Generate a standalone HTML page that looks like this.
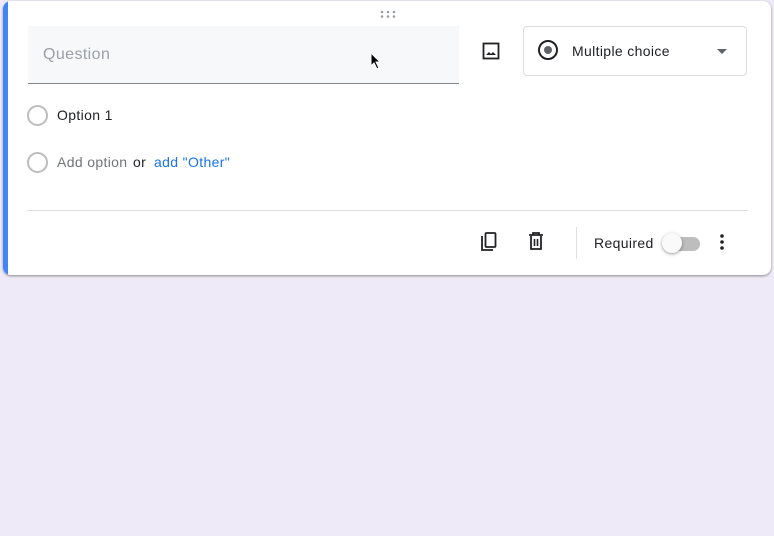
<!DOCTYPE html>
<html><head><meta charset="utf-8"><style>
html,body{margin:0;padding:0;width:774px;height:536px;overflow:hidden;background:#efeaf7;font-family:"Liberation Sans",sans-serif;}
.card{position:absolute;left:3px;top:1px;width:768px;height:274px;background:#fff;border-radius:8px;box-shadow:0 1px 2px rgba(0,0,0,.3),0 1px 3px rgba(0,0,0,.15);overflow:hidden;}
.bar{position:absolute;left:0;top:0;bottom:0;width:5px;background:#4285f4;}
.q{position:absolute;left:25px;top:25px;width:431px;height:57px;background:#f7f8f9;border-bottom:1px solid #80868b;}
.q span{position:absolute;left:15px;top:20px;font-size:16px;color:#9aa0a6;letter-spacing:0.4px;}
.radio{position:absolute;width:17px;height:17px;border:2px solid #bdbdbd;border-radius:50%;}
.t{position:absolute;font-size:14px;letter-spacing:0.35px;}
.sel{position:absolute;left:520px;top:25px;width:222px;height:48px;border:1px solid #dadce0;border-radius:4px;}
.hr{position:absolute;left:24px;top:209px;width:721px;height:1px;background:#e0e0e0;}
.vr{position:absolute;left:573px;top:226px;width:1px;height:32px;background:#e0e0e0;}
</style></head><body>
<div class="card">
<div class="bar"></div>
<svg style="position:absolute;left:377px;top:9px" width="16" height="8"><g fill="#9aa0a6"><circle cx="2" cy="2" r="1.3"/><circle cx="8" cy="2" r="1.3"/><circle cx="14" cy="2" r="1.3"/><circle cx="2" cy="6.5" r="1.3"/><circle cx="8" cy="6.5" r="1.3"/><circle cx="14" cy="6.5" r="1.3"/></g></svg>
<div class="q"><span>Question</span></div>
<svg style="position:absolute;left:367px;top:51px" width="12" height="18"><path d="M1 1 L1 14 L4 11 L7 17 L9 16 L6 10 L10 10 Z" fill="#000" stroke="#fff" stroke-width="1"/></svg>
<svg style="position:absolute;left:479px;top:41px" width="18" height="18"><rect x="1.5" y="1.5" width="15" height="15" fill="none" stroke="#202124" stroke-width="1.8"/><path d="M4 13 L7 10 L9 12 L11 10 L14 13 Z" fill="#202124"/></svg>
<div class="sel">
<div style="position:absolute;left:14px;top:13px;width:16px;height:16px;border:2px solid #202124;border-radius:50%"></div>
<div style="position:absolute;left:20px;top:19px;width:8px;height:8px;background:#5f6368;border-radius:50%"></div>
<div class="t" style="left:48px;top:16px;color:#202124">Multiple choice</div>
<div style="position:absolute;left:193px;top:22px;width:0;height:0;border-left:5px solid transparent;border-right:5px solid transparent;border-top:5px solid #5f6368"></div>
</div>
<div class="radio" style="left:24px;top:104px"></div>
<div class="t" style="left:54px;top:106px;color:#202124">Option 1</div>
<div class="radio" style="left:24px;top:151px"></div>
<div class="t" style="left:54px;top:153px;color:#70757a">Add option</div>
<div class="t" style="left:130px;top:153px;color:#202124">or</div>
<div class="t" style="left:151px;top:153px;color:#1a73e8">add "Other"</div>
<div class="hr"></div>
<svg style="position:absolute;left:475px;top:230px" width="20" height="22"><path d="M4 5 V19 H15" fill="none" stroke="#202124" stroke-width="1.8"/><rect x="7.5" y="2" width="10" height="14" rx="1" fill="none" stroke="#202124" stroke-width="1.8"/></svg>
<svg style="position:absolute;left:524px;top:230px" width="18" height="20"><path d="M2 4 H16 M6 4 V2 H12 V4" fill="none" stroke="#202124" stroke-width="1.8"/><path d="M4 5 V18 H14 V5" fill="none" stroke="#202124" stroke-width="1.8"/><path d="M7.5 8 V15 M10.5 8 V15" stroke="#202124" stroke-width="1.6"/></svg>
<div class="vr"></div>
<div class="t" style="left:591px;top:234px;color:#202124">Required</div>
<div style="position:absolute;left:665px;top:236px;width:32px;height:14px;background:#bdbdbd;border-radius:7px"></div>
<div style="position:absolute;left:659px;top:232px;width:20px;height:20px;background:#fafafa;border-radius:50%;box-shadow:0 1px 3px rgba(0,0,0,.4)"></div>
<svg style="position:absolute;left:716px;top:232px" width="6" height="18"><g fill="#202124"><circle cx="3" cy="3" r="1.8"/><circle cx="3" cy="9" r="1.8"/><circle cx="3" cy="15" r="1.8"/></g></svg>
</div>
</body></html>
